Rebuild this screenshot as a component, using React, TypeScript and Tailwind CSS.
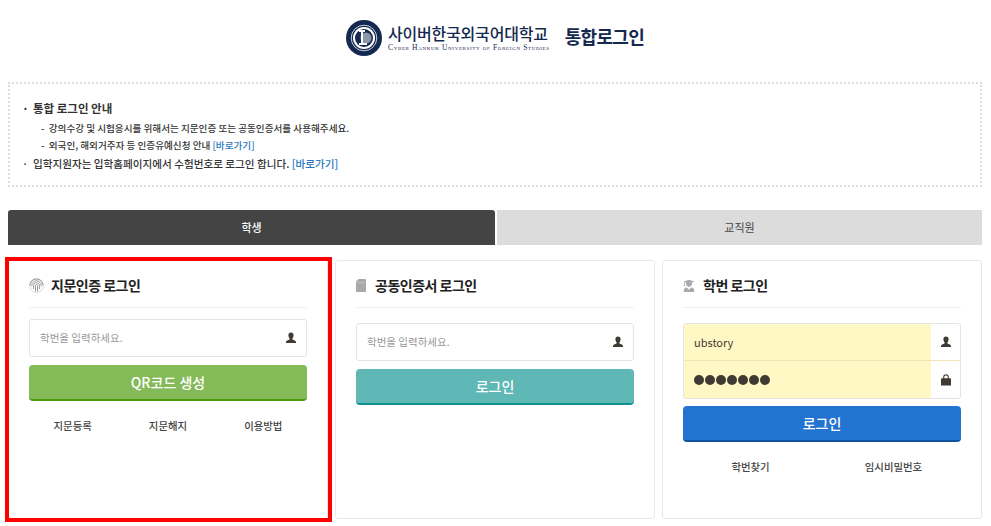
import { FaUserGraduate } from "react-icons/fa";

const font = "font-['Noto_Sans_CJK_KR','Noto_Sans',sans-serif]";

function UserIcon() {
  return (
    <svg viewBox="0 0 12 12" className="w-3 h-3 text-[#3f3a32]" fill="currentColor">
      <path d="M6 .5c-1.700 0-2.700 1.300-2.600 3 .1 1.300.6 2.300 1.200 3 .1.5 0 1-.5 1.200-1.200.5-2.700.9-3 1.800-.1.5-.1 1-.1 1.500h10c0-.5 0-1-.1-1.500-.3-.9-1.800-1.300-3-1.800-.5-.2-.6-.7-.5-1.200.6-.7 1.100-1.700 1.200-3C8.700 1.800 7.700.5 6 .5z" />
    </svg>
  );
}

function LockIcon() {
  return (
    <svg viewBox="0 0 12 12" className="w-3 h-3 text-[#3f3a32]" fill="currentColor">
      <path d="M3.200 4.200V2.900C3.200 1.200 4.300.3 6 .3s2.800.9 2.800 2.600v1.300h1.400a.8.8 0 0 1 .8.8v6.500H1V5a.8.8 0 0 1 .8-.8h1.400zm1.100 0h3.400V2.900c0-1-.6-1.500-1.700-1.500s-1.700.5-1.700 1.500v1.300z" />
    </svg>
  );
}

function CardIcon() {
  return (
    <svg viewBox="0 0 10 13" className="w-[10px] h-[13px] text-[#a9a9a9]" fill="currentColor">
      <path d="M2.500 0H9a1 1 0 0 1 1 1v11a1 1 0 0 1-1 1H1a1 1 0 0 1-1-1V2.500z" />
      <path d="M1 3.500h8v.6H1z" fill="#d8d8d8" />
    </svg>
  );
}

function FingerprintIcon() {
  return (
    <svg viewBox="0 0 15 15" className="w-[15px] h-[15px] text-[#9a9a9a]" fill="none" stroke="currentColor" strokeWidth="1">
      <path d="M1 7.500a6.500 6.500 0 0 1 13 0" />
      <path d="M2.800 8.500V7.500a4.700 4.700 0 0 1 9.400 0v1" />
      <path d="M4.600 11V7.500a2.900 2.900 0 0 1 5.800 0V11" />
      <path d="M6.500 13.500V7.500a1 1 0 0 1 2 0v6" />
      <circle cx="7.500" cy="7.500" r="7" strokeOpacity="0.35" />
    </svg>
  );
}

function CardTitle({ icon, title, iconWidth }: { icon: React.ReactNode; title: string; iconWidth: string }) {
  return (
    <div className="flex items-center h-[47px] pt-[3px] border-b border-[#f0f0f0]">
      <span className={`${iconWidth} flex items-center`}>{icon}</span>
      <h3 className="text-[14px] font-bold text-[#222] tracking-[-0.5px]">{title}</h3>
    </div>
  );
}

function IdInput() {
  return (
    <div className="flex items-center justify-between h-[38px] border border-[#e4e4e4] rounded-[3px] pl-[10px] pr-[9px] bg-white">
      <span className="text-[10.500px] text-[#999]">학번을 입력하세요.</span>
      <UserIcon />
    </div>
  );
}

function SubmitButton({ label, color }: { label: string; color: string }) {
  return (
    <button className={`w-full h-[36px] rounded-[4px] border-b-2 text-white text-[14px] font-medium ${color}`}>
      {label}
    </button>
  );
}

function Links({ items }: { items: string[] }) {
  return (
    <div className="flex -mx-[4px]">
      {items.map((item) => (
        <a key={item} className="flex-1 text-center text-[10.400px] font-medium text-[#444]">
          {item}
        </a>
      ))}
    </div>
  );
}

export default function App() {
  return (
    <div className={`min-h-[526px] bg-white px-2 overflow-hidden ${font}`}>
      {/* Header */}
      <header className="flex items-center gap-[15px] h-[75px] pl-[338px] w-[974px]">
        <div className="flex items-center gap-[6px]">
          <svg viewBox="0 0 36 36" className="w-[36px] h-[36px]">
            <circle cx="18" cy="18" r="18" fill="#14294f" />
            <circle cx="18" cy="18" r="12.800" fill="none" stroke="#c9d0dc" strokeWidth="1" />
            <circle cx="18" cy="18" r="11" fill="#fff" />
            <circle cx="18" cy="18" r="9" fill="#14294f" />
            <circle cx="20" cy="18" r="5.500" fill="#8b97ab" />
            <path d="M13 10h6v2h-2v11h4v2h-8v-2h2V12h-2z" fill="#fff" />
          </svg>
          <div className="flex flex-col items-start">
            <span className="text-[16px] leading-[20px] font-medium text-[#14294f] tracking-[-0.2px]">
              사이버한국외국어대학교
            </span>
            <span className="font-['Liberation_Serif',serif] text-[7.500px] leading-[10px] text-[#14294f] tracking-[0.65px] [font-variant:small-caps] whitespace-nowrap">
              Cyber Hankuk University of Foreign Studies
            </span>
          </div>
        </div>
        <h1 className="text-[18px] font-bold text-[#14294f] tracking-[-0.7px] -mt-[2px]">통합로그인</h1>
      </header>

      {/* Notice */}
      <section className="mt-[7px] w-[974px] h-[105px] border-2 border-dotted border-[#ddd] pt-[14px] pl-[12px] text-[#333]">
        <p className="text-[11.500px] leading-[20px] font-bold">
          <span className="inline-block w-[11px]">·</span>통합 로그인 안내
        </p>
        <ul className="pl-[19px] text-[9.600px] font-medium leading-[17px] mt-[2px]">
          <li>- &nbsp;강의수강 및 시험응시를 위해서는 지문인증 또는 공동인증서를 사용해주세요.</li>
          <li>
            - &nbsp;외국인, 해외거주자 등 인증유예신청 안내 <a className="text-[#2a77c0]">[바로가기]</a>
          </li>
        </ul>
        <p className="text-[10.600px] font-medium leading-[18px] mt-[1px]">
          <span className="inline-block w-[11px]">·</span>입학지원자는 입학홈페이지에서 수험번호로 로그인 합니다.{" "}
          <a className="text-[#2a77c0]">[바로가기]</a>
        </p>
      </section>

      {/* Tabs */}
      <nav className="mt-[23px] w-[974px] flex gap-[2px] h-[35px] text-[11px]">
        <div className="w-[487px] rounded-t-[3px] bg-[#444] text-white font-medium flex items-center justify-center">
          학생
        </div>
        <div className="flex-1 bg-[#dcdcdc] text-[#444] flex items-center justify-center">교직원</div>
      </nav>

      {/* Login cards */}
      <div className="mt-[15px] grid grid-cols-3 gap-x-[7px] w-[974px] h-[259px] [&>div]:border [&>div]:border-[#e8e8e8] [&>div]:rounded-[3px] [&>div]:px-[20px] [&>div]:bg-white">
        <div className="relative">
          <CardTitle iconWidth="w-[22px]" icon={<FingerprintIcon />} title="지문인증 로그인" />
          <div className="mt-[11px]">
            <IdInput />
          </div>
          <div className="mt-[8px]">
            <SubmitButton label="QR코드 생성" color="bg-[#84ba58] border-[#4f9b10]" />
          </div>
          <div className="mt-[17px]">
            <Links items={["지문등록", "지문해지", "이용방법"]} />
          </div>
          {/* red annotation frame */}
          <div className="absolute -left-[4px] -top-[4px] w-[327px] h-[265px] border-4 border-[#ff0000] pointer-events-none" />
        </div>

        <div>
          <CardTitle iconWidth="w-[19px]" icon={<CardIcon />} title="공동인증서 로그인" />
          <div className="mt-[15px]">
            <IdInput />
          </div>
          <div className="mt-[8px]">
            <SubmitButton label="로그인" color="bg-[#5fb7b6] border-[#13918f]" />
          </div>
        </div>

        <div>
          <CardTitle
            iconWidth="w-[20px]"
            icon={<FaUserGraduate className="w-[12px] h-[12px] text-[#a9a9a9]" />}
            title="학번 로그인"
          />
          <div className="mt-[15px] border border-[#e4e4e4] rounded-[3px] overflow-hidden">
            <div className="flex h-[37px] border-b border-[#eee4b8]">
              <div className="w-[247px] bg-[#fff7c4] pl-[10px] flex items-center text-[11px] text-[#3f3a32]">
                ubstory
              </div>
              <div className="flex-1 flex items-center justify-center">
                <UserIcon />
              </div>
            </div>
            <div className="flex h-[37px]">
              <div className="w-[247px] bg-[#fff7c4] pl-[10px] flex items-center gap-[1px]">
                {[0, 1, 2, 3, 4, 5, 6].map((n) => (
                  <span key={n} className="w-[10px] h-[10px] rounded-full bg-[#3f3a32]" />
                ))}
              </div>
              <div className="flex-1 flex items-center justify-center">
                <LockIcon />
              </div>
            </div>
          </div>
          <div className="mt-[7px]">
            <SubmitButton label="로그인" color="bg-[#2274d0] border-[#10529e]" />
          </div>
          <div className="mt-[17px]">
            <Links items={["학번찾기", "임시비밀번호"]} />
          </div>
        </div>
      </div>
    </div>
  );
}
